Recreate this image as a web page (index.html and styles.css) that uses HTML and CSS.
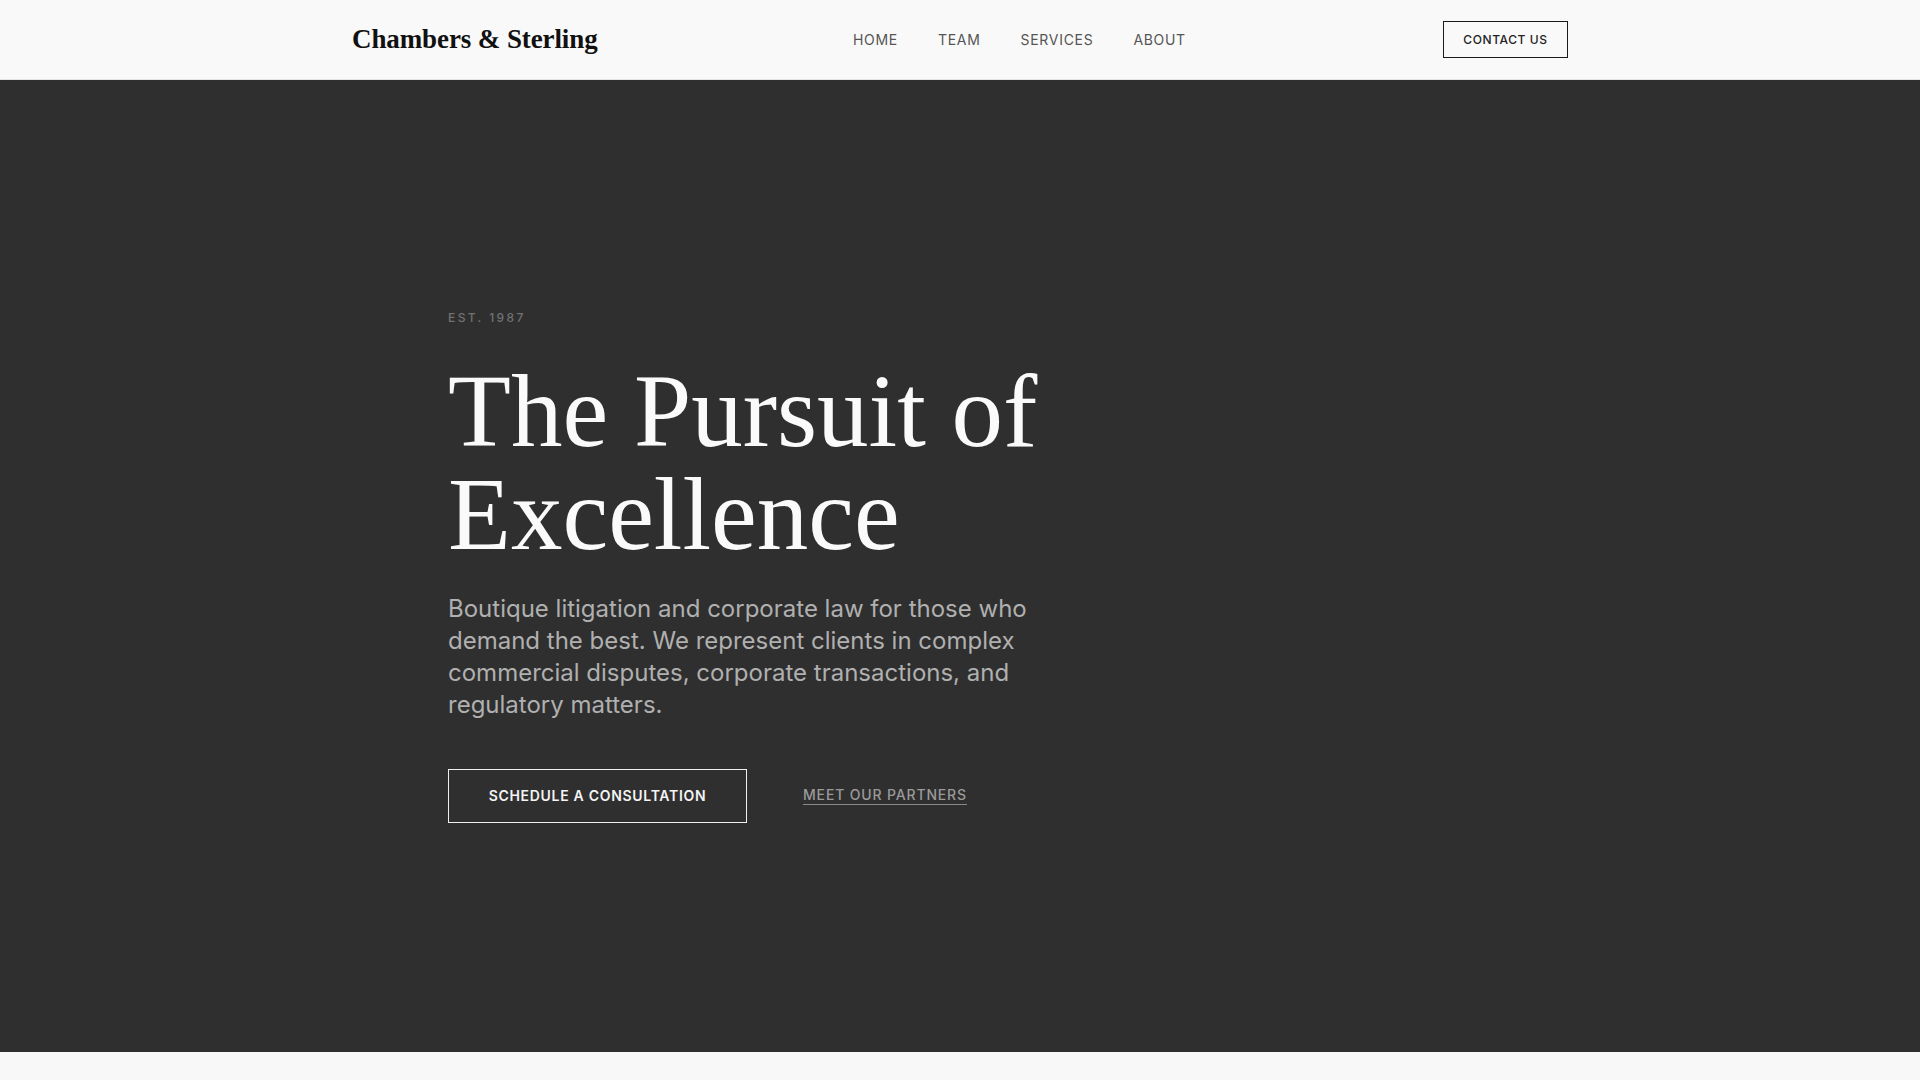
FILE: index.html
```html
<!DOCTYPE html>
<html lang="en">
<head>
<meta charset="utf-8">
<title>Chambers &amp; Sterling</title>
<link rel="stylesheet" href="styles.css">
</head>
<body>
<header class="site-header">
  <div class="header-inner">
    <a class="logo" href="#">Chambers &amp; Sterling</a>
    <nav class="main-nav">
      <a href="#">HOME</a>
      <a href="#">TEAM</a>
      <a href="#">SERVICES</a>
      <a href="#">ABOUT</a>
    </nav>
    <a class="contact-btn" href="#">CONTACT US</a>
  </div>
</header>
<section class="hero">
  <div class="hero-inner">
    <p class="eyebrow">EST. 1987</p>
    <h1 class="hero-title">The Pursuit of<br>Excellence</h1>
    <p class="hero-text">Boutique litigation and corporate law for those who demand the best. We represent clients in complex commercial disputes, corporate transactions, and regulatory matters.</p>
    <div class="hero-actions">
      <a class="btn-outline" href="#">SCHEDULE A CONSULTATION</a>
      <a class="link-underline" href="#">MEET OUR PARTNERS</a>
    </div>
  </div>
</section>
<section class="below"></section>
</body>
</html>
```
FILE: styles.css
```css
* { box-sizing: border-box; }
html, body { margin: 0; padding: 0; }
body {
  background: #f8f8f8;
  font-family: "Inter", "Liberation Sans", sans-serif;
  color: #222;
}
a { text-decoration: none; color: inherit; }

.site-header {
  height: 80px;
  background: #f9f9f9;
  border-bottom: 1px solid #e4e4e4;
}
.header-inner {
  max-width: 1216px;
  margin: 0 auto;
  height: 100%;
  display: flex;
  align-items: center;
}
.logo {
  width: 501px;
  font-family: "Liberation Serif", "DejaVu Serif", serif;
  font-weight: 700;
  font-size: 27px;
  color: #111;
  letter-spacing: -0.1px;
}
.main-nav {
  display: flex;
  gap: 40px;
}
.main-nav a {
  font-size: 14px;
  letter-spacing: 0.05em;
  color: #555;
}
.contact-btn {
  margin-left: auto;
  width: 125px;
  height: 37px;
  border: 1px solid #1a1a1a;
  display: flex;
  align-items: center;
  justify-content: center;
  font-size: 12px;
  font-weight: 500;
  letter-spacing: 0.05em;
  color: #222;
}

.hero {
  height: 972px;
  background: #2f2f2f;
  display: flex;
  align-items: center;
}
.hero-inner {
  width: 1024px;
  margin: 0 auto;
}
.eyebrow {
  margin: 0 0 35px;
  font-size: 12px;
  letter-spacing: 0.2em;
  color: #727272;
  font-weight: 500;
}
.hero-title {
  margin: 0 0 27px;
  font-family: "Liberation Serif", "DejaVu Serif", serif;
  font-weight: 400;
  font-size: 103px;
  line-height: 103px;
  letter-spacing: 0;
  color: #fafafa;
}
.hero-text {
  margin: 0 0 48px;
  max-width: 600px;
  font-size: 24px;
  line-height: 32px;
  color: #b0b0b0;
}
.hero-actions {
  display: flex;
  align-items: center;
  gap: 56px;
}
.btn-outline {
  width: 299px;
  height: 54px;
  border: 1.5px solid #f0f0f0;
  display: flex;
  align-items: center;
  justify-content: center;
  font-size: 14px;
  font-weight: 600;
  letter-spacing: 0.05em;
  color: #f4f4f4;
}
.link-underline {
  font-size: 14px;
  font-weight: 500;
  letter-spacing: 0.06em;
  color: #9a9a9a;
  border-bottom: 1px solid #8a8a8a;
  padding-bottom: 1px;
}
.below {
  height: 200px;
  background: #f8f8f8;
}
```
